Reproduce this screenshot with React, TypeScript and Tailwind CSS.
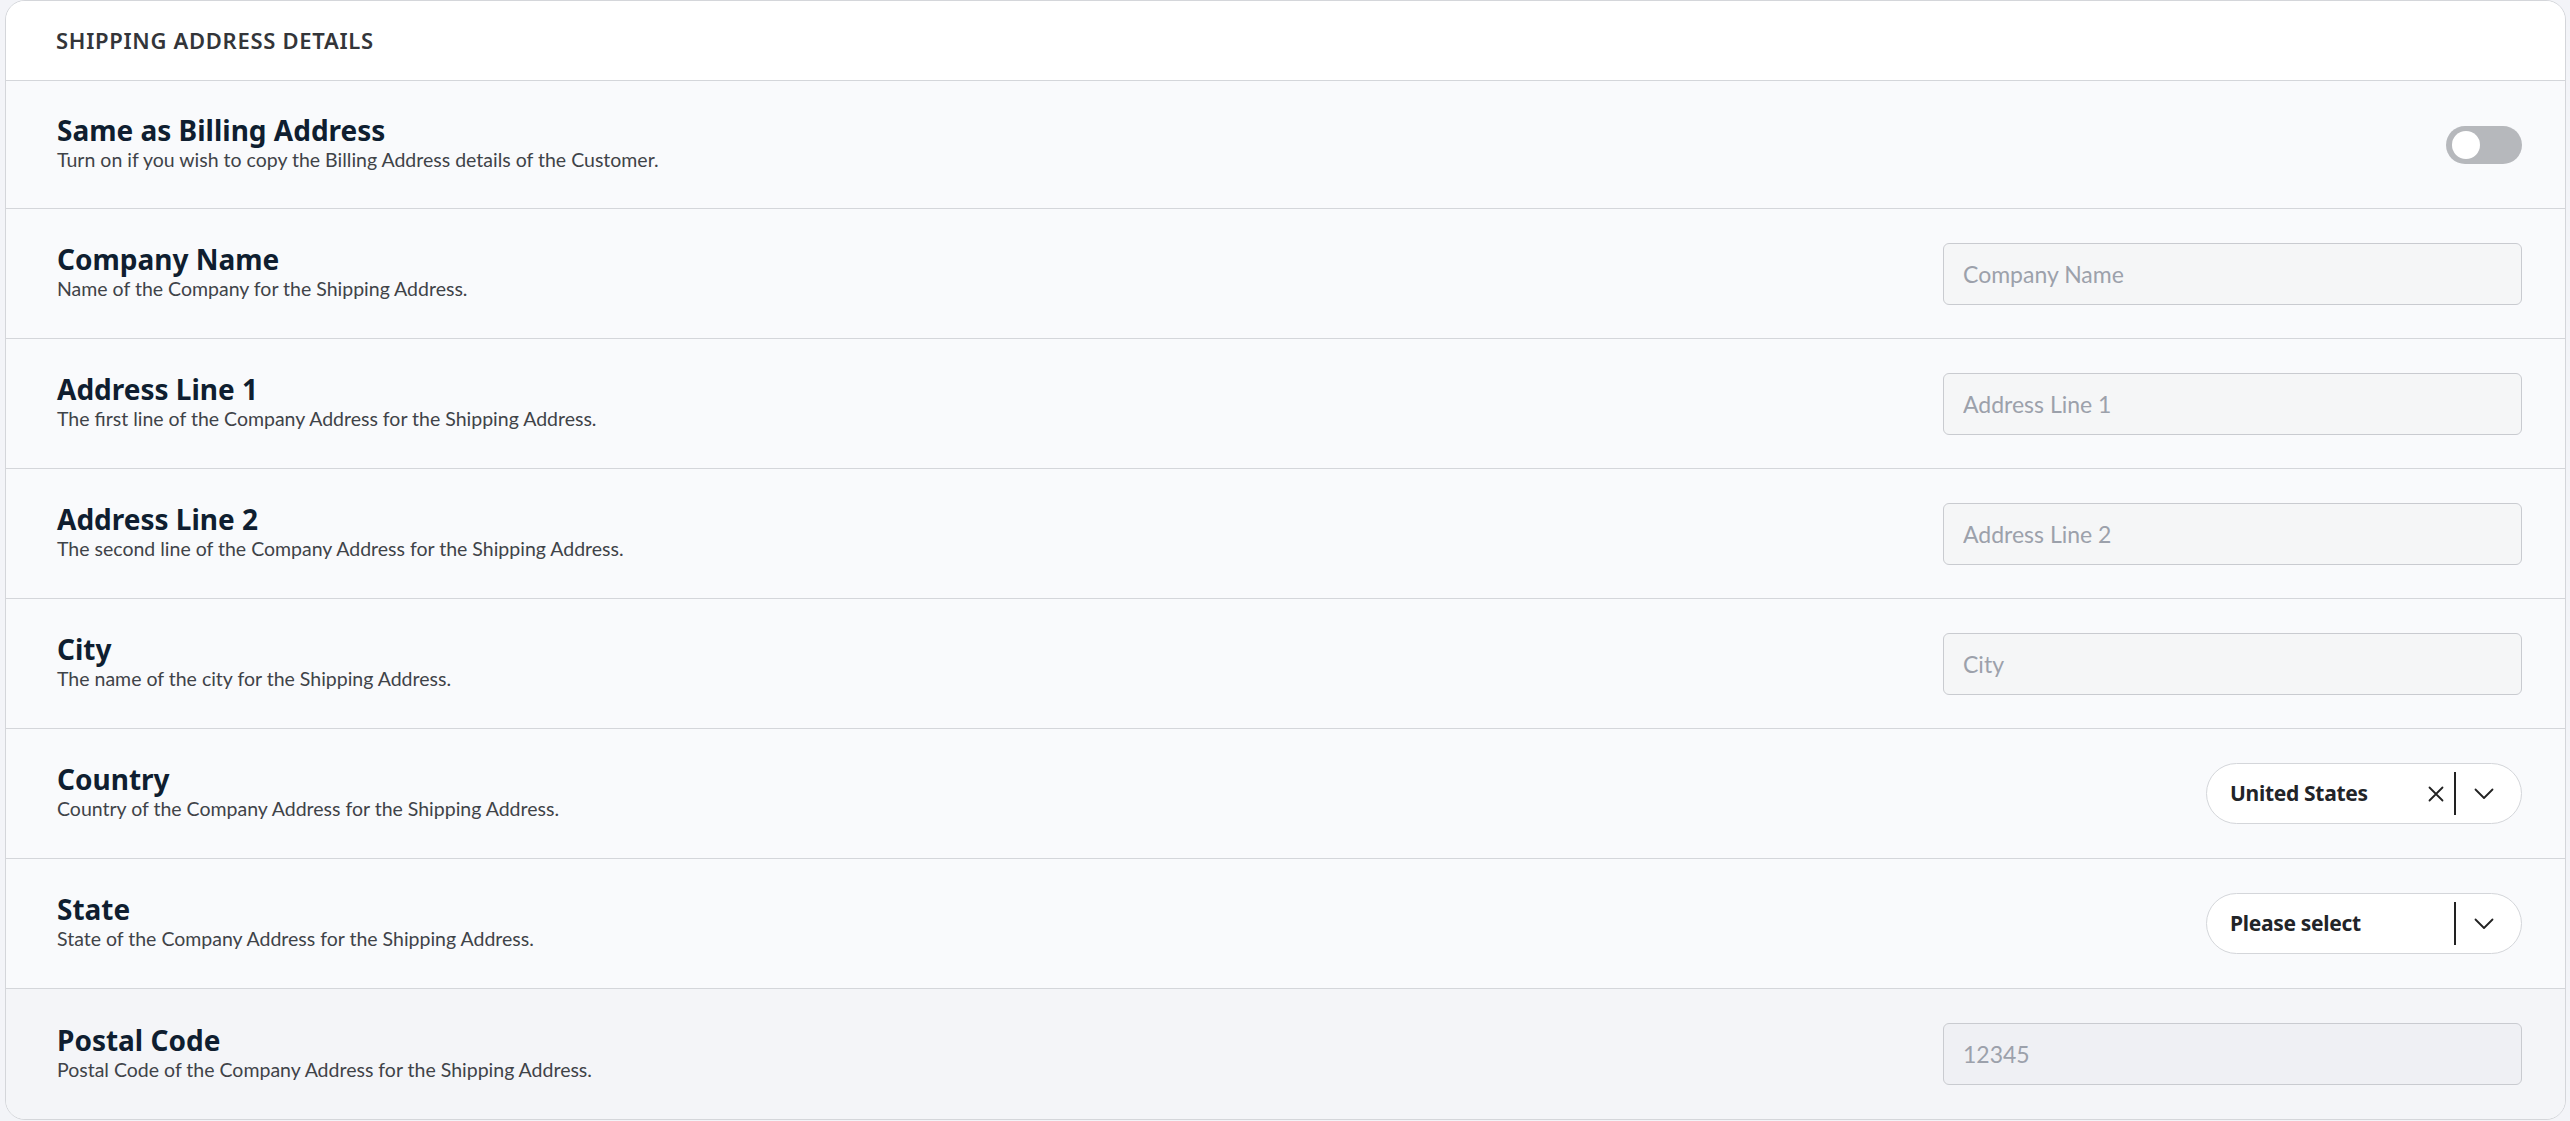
import React, { useState } from 'react';

type Field = {
  title: string;
  description: string;
  kind: 'toggle' | 'input' | 'select';
  placeholder?: string;
  value?: string;
  clearable?: boolean;
};

const FIELDS: Field[] = [
  { title: 'Same as Billing Address', description: 'Turn on if you wish to copy the Billing Address details of the Customer.', kind: 'toggle' },
  { title: 'Company Name', description: 'Name of the Company for the Shipping Address.', kind: 'input', placeholder: 'Company Name' },
  { title: 'Address Line 1', description: 'The first line of the Company Address for the Shipping Address.', kind: 'input', placeholder: 'Address Line 1' },
  { title: 'Address Line 2', description: 'The second line of the Company Address for the Shipping Address.', kind: 'input', placeholder: 'Address Line 2' },
  { title: 'City', description: 'The name of the city for the Shipping Address.', kind: 'input', placeholder: 'City' },
  { title: 'Country', description: 'Country of the Company Address for the Shipping Address.', kind: 'select', value: 'United States', clearable: true },
  { title: 'State', description: 'State of the Company Address for the Shipping Address.', kind: 'select', value: 'Please select' },
  { title: 'Postal Code', description: 'Postal Code of the Company Address for the Shipping Address.', kind: 'input', placeholder: '12345' },
];

const HEAVY = { fontFamily: '"Noto Sans", Lato, sans-serif' };

const Toggle: React.FC = () => {
  const [on, setOn] = useState(false);
  return (
    <button
      type="button"
      onClick={() => setOn(!on)}
      className={`w-[76px] h-[38px] rounded-full flex items-center px-[6px] ${on ? 'bg-blue-600 justify-end' : 'bg-[#b6b8bc] justify-start'}`}
    >
      <span className="w-[28px] h-[28px] rounded-full bg-white block" />
    </button>
  );
};

const SelectBox: React.FC<{ value: string; clearable?: boolean }> = ({ value, clearable }) => (
  <div className="w-[316px] h-[61px] rounded-full border border-[#d4d6da] bg-white flex items-center pl-[23px] pr-[27px]">
    <span className="flex-1 text-[21px] font-bold text-[#222428] tracking-[-0.3px]" style={HEAVY}>{value}</span>
    {clearable && (
      <svg width="16" height="16" viewBox="0 0 16 16" className="mr-[10px]">
        <path d="M1.5 1.5 L14.5 14.5 M14.5 1.5 L1.5 14.5" stroke="#222" strokeWidth="1.8" strokeLinecap="round" />
      </svg>
    )}
    <span className="w-[2px] h-[43px] bg-[#222]" />
    <svg width="20" height="12" viewBox="0 0 20 12" className="ml-[18px]">
      <path d="M1.5 1.5 L10 10 L18.5 1.5" stroke="#222" strokeWidth="1.8" fill="none" strokeLinecap="round" strokeLinejoin="round" />
    </svg>
  </div>
);

const App: React.FC = () => {
  return (
    <div className="min-h-screen bg-[#f3f4f8] pl-[5px] pr-[4px]" style={{ fontFamily: 'Lato, "Noto Sans", sans-serif' }}>
      <div className="h-[1120px] rounded-[20px] border border-[#d4d6da] overflow-hidden bg-[#f9fafc] flex flex-col">
        <header className="h-[80px] shrink-0 bg-white border-b border-[#d4d6da] flex items-center pl-[50px]">
          <h2 className="text-[22px] font-semibold text-[#333539] tracking-[0.7px]" style={HEAVY}>SHIPPING ADDRESS DETAILS</h2>
        </header>
        {FIELDS.map((f, i) => {
          const last = i === FIELDS.length - 1;
          return (
            <div
              key={f.title}
              className={`flex items-center justify-between pl-[51px] pr-[43px] ${last ? 'flex-1 bg-[#f4f5f8]' : 'shrink-0 border-b border-[#d4d6da]'} ${i === 0 ? 'h-[128px]' : last ? '' : 'h-[130px]'}`}
            >
              <div className="-mt-[2px]">
                <div className="text-[28px] font-bold text-[#0f1e30] leading-[32px]" style={HEAVY}>{f.title}</div>
                <div className="text-[19.5px] text-[#3f4348] leading-[27px]">{f.description}</div>
              </div>
              {f.kind === 'toggle' && <Toggle />}
              {f.kind === 'input' && (
                <input
                  placeholder={f.placeholder}
                  className={`w-[579px] h-[62px] rounded-[6px] border border-[#c9cbd0] px-[19px] text-[23px] text-[#222] placeholder-[#9ca1ab] outline-none ${last ? 'bg-[#eff0f4]' : 'bg-[#f5f6f7]'}`}
                />
              )}
              {f.kind === 'select' && <SelectBox value={f.value || ''} clearable={f.clearable} />}
            </div>
          );
        })}
      </div>
    </div>
  );
};

export default App;
